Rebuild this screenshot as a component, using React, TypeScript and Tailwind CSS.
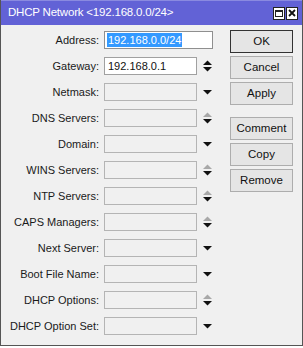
import React from "react";

type Arrow = "none" | "updown" | "down" | "grayup";

const rows: { label: string; arrow: Arrow }[] = [
  { label: "Address:", arrow: "none" },
  { label: "Gateway:", arrow: "updown" },
  { label: "Netmask:", arrow: "down" },
  { label: "DNS Servers:", arrow: "grayup" },
  { label: "Domain:", arrow: "down" },
  { label: "WINS Servers:", arrow: "grayup" },
  { label: "NTP Servers:", arrow: "grayup" },
  { label: "CAPS Managers:", arrow: "grayup" },
  { label: "Next Server:", arrow: "down" },
  { label: "Boot File Name:", arrow: "down" },
  { label: "DHCP Options:", arrow: "grayup" },
  { label: "DHCP Option Set:", arrow: "down" },
];

function ArrowIcon({ type }: { type: Arrow }) {
  if (type === "down") {
    return (
      <svg width="11" height="18" viewBox="0 0 11 18">
        <polygon points="1,7 10,7 5.5,11.5" fill="#111" />
      </svg>
    );
  }
  const upColor = type === "grayup" ? "#a8a8a8" : "#111";
  return (
    <svg width="11" height="18" viewBox="0 0 11 18">
      <polygon points="5.5,3.5 10,8 1,8" fill={upColor} />
      <polygon points="1,10 10,10 5.5,14.5" fill="#111" />
    </svg>
  );
}

function Btn({ children, def }: { children: React.ReactNode; def?: boolean }) {
  return (
    <div
      className={
        "h-[23px] w-[63px] flex items-center justify-center bg-[#e5e5e5] text-[#111] text-[11.5px] " +
        (def ? "border border-[#333]" : "border border-[#adadad]")
      }
    >
      {children}
    </div>
  );
}

export default function App() {
  return (
    <div className="w-[303px] h-[348px] bg-white font-['Liberation_Sans',Arial,sans-serif] text-[11px]">
      <div className="w-[303px] h-[346px] flex flex-col bg-[#f0f0f0] border-l border-r border-b border-[#555]">
        <div className="h-[25px] bg-[#6262d6] flex items-center pl-[7px] pr-[4px] border-t border-[#8a8ae0]">
          <span className="text-white text-[11.5px] tracking-[-0.2px]">DHCP Network &lt;192.168.0.0/24&gt;</span>
          <div className="ml-auto flex gap-[1px]">
            <div className="w-[12px] h-[13px] bg-white border border-[#222] flex items-center justify-center">
              <div className="w-[8px] h-[7px] border border-[#222] border-t-2" />
            </div>
            <div className="w-[12px] h-[13px] bg-white border border-[#222] flex items-center justify-center">
              <svg width="8" height="8" viewBox="0 0 8 8">
                <path d="M1 1 L7 7 M7 1 L1 7" stroke="#111" strokeWidth="1.8" />
              </svg>
            </div>
          </div>
        </div>
        <div className="flex">
          <div className="w-[229px] pt-[6px] flex flex-col gap-[8px]">
            {rows.map((r, i) => (
              <div key={r.label} className="h-[18px] flex items-center">
                <div className="w-[98px] text-right text-[#1a1a1a]">{r.label}</div>
                <div className="w-[5px]" />
                {i === 0 ? (
                  <div className="w-[109px] h-[18px] bg-white border border-[#8f8f8f] flex items-center pl-[2px]">
                    <span className="bg-[#3399ff] text-white leading-[14px] px-[1px]">192.168.0.0/24</span>
                  </div>
                ) : (
                  <>
                    <div
                      className={
                        "w-[93px] h-[18px] border flex items-center pl-[3px] " +
                        (i === 1 ? "bg-white border-[#a0a0a0]" : "bg-[#f0f0f0] border-[#b4b4b4]")
                      }
                    >
                      {i === 1 ? <span className="text-[#111]">192.168.0.1</span> : null}
                    </div>
                    <div className="w-[5px]" />
                    <ArrowIcon type={r.arrow} />
                  </>
                )}
              </div>
            ))}
          </div>
          <div className="pt-[5px] flex flex-col gap-[3px]">
            <Btn def>OK</Btn>
            <Btn>Cancel</Btn>
            <Btn>Apply</Btn>
            <div className="h-[6px]" />
            <Btn>Comment</Btn>
            <Btn>Copy</Btn>
            <Btn>Remove</Btn>
          </div>
        </div>
      </div>
    </div>
  );
}
